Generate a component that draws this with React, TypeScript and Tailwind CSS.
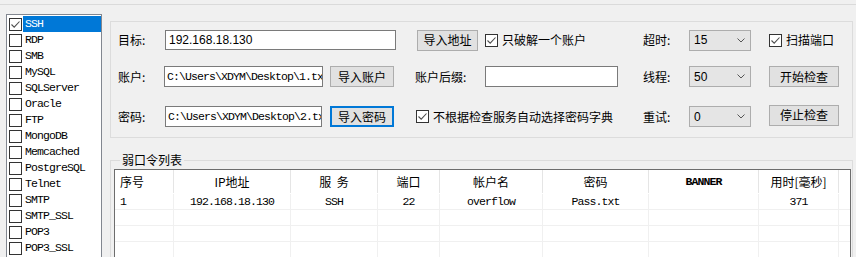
import React from 'react';

const UI = { fontFamily: '"Noto Sans CJK SC", "Noto Sans", sans-serif' };
const MONO = { fontFamily: '"Liberation Mono", "Noto Sans CJK SC", monospace' };
const SANS = { fontFamily: '"Liberation Sans", Arial, sans-serif' };

const SERVICES = [
  'SSH', 'RDP', 'SMB', 'MySQL', 'SQLServer', 'Oracle', 'FTP', 'MongoDB',
  'Memcached', 'PostgreSQL', 'Telnet', 'SMTP', 'SMTP_SSL', 'POP3', 'POP3_SSL',
];

const COLUMNS = [
  { title: '序号', width: 59, align: 'left' },
  { title: 'IP地址', width: 117, align: 'center' },
  { title: '服  务', width: 87, align: 'center' },
  { title: '端口', width: 62, align: 'center' },
  { title: '帐户名', width: 103, align: 'center' },
  { title: '密码', width: 106, align: 'center' },
  { title: 'BANNER', width: 110, align: 'center' },
  { title: '用时[毫秒]', width: 80, align: 'center' },
] as const;

const ROWS = [
  ['1', '192.168.18.130', 'SSH', '22', 'overflow', 'Pass.txt', '', '371'],
  ['', '', '', '', '', '', '', ''],
  ['', '', '', '', '', '', '', ''],
  ['', '', '', '', '', '', '', ''],
];

// SimSun-like narrow mono text
const monoText = 'text-[11.5px] tracking-[-0.9px]';

function Check({ checked }: { checked?: boolean }) {
  return (
    <span className="flex h-[13px] w-[13px] shrink-0 items-center justify-center border border-[#333333] bg-white">
      {checked && (
        <svg width="11" height="11" viewBox="0 0 11 11">
          <path d="M1.5 5.5 L4.2 8.2 L9.5 2.5" stroke="#4d4d4d" strokeWidth="1.1" fill="none" />
        </svg>
      )}
    </span>
  );
}

function Button({ label, w, focused }: { label: string; w: string; focused?: boolean }) {
  return (
    <div
      className={`flex h-[21px] items-center justify-center bg-[#e1e1e1] text-[12px] ${w} ${
        focused ? 'border-2 border-[#0078d7]' : 'border border-[#adadad]'
      }`}
    >
      {label}
    </div>
  );
}

function Select({ value }: { value: string }) {
  return (
    <div className="flex h-[21px] w-[62px] items-center justify-between border border-[#adadad] bg-[#e5e5e5] pl-[4px] pr-[5px]">
      <span className="text-[12px]" style={SANS}>{value}</span>
      <svg width="8" height="5" viewBox="0 0 8 5">
        <path d="M0.5 0.5 L4 4 L7.5 0.5" stroke="#555" strokeWidth="1" fill="none" />
      </svg>
    </div>
  );
}

function PathInput({ value, w }: { value: string; w: string }) {
  return (
    <div className={`flex h-[21px] items-center overflow-hidden whitespace-nowrap border border-[#7a7a7a] bg-white pl-[2px] ${w}`}>
      <span className={monoText} style={MONO}>{value}</span>
    </div>
  );
}

export default function App() {
  return (
    <div className="h-[257px] w-[856px] overflow-hidden bg-[#f0f0f0] text-black" style={UI}>
      <div className="h-[4px]" />
      <div className="h-px bg-[#dadada]" />
      <div className="flex items-start">
        {/* Service list */}
        <div className="ml-[6px] mt-[9px] h-[260px] w-[96px] border border-[#828790] bg-white pt-[1px]">
          {SERVICES.map((s, i) => (
            <div key={s} className="flex h-[16px] items-center">
              <div className="ml-[2px] mr-px">
                <Check checked={i === 0} />
              </div>
              <div
                className={`flex h-[16px] flex-1 items-center pl-[2px] ${i === 0 ? 'bg-[#0078d7] text-white' : ''}`}
              >
                <span className={monoText} style={MONO}>{s}</span>
              </div>
            </div>
          ))}
        </div>

        <div className="ml-[8px] mt-[16px] flex w-[743px] flex-col">
          {/* Settings group */}
          <div className="h-[117px] border border-[#dcdcdc] pt-[7px] text-[12px]">
            <div className="flex h-[22px] items-center pl-[7px]">
              <span className="w-[47px]">目标:</span>
              <div className="flex h-[20px] w-[231px] items-center border border-[#7a7a7a] bg-white pl-[3px]">
                <span style={SANS}>192.168.18.130</span>
              </div>
              <div className="ml-[21px]"><Button label="导入地址" w="w-[61px]" /></div>
              <div className="ml-[7px] flex w-[158px] items-center gap-[4px]">
                <Check checked />
                <span>只破解一个账户</span>
              </div>
              <span className="w-[46px]">超时:</span>
              <Select value="15" />
              <div className="ml-[18px] flex items-center gap-[4px]">
                <Check checked />
                <span>扫描端口</span>
              </div>
            </div>

            <div className="mt-[15px] flex h-[21px] items-center pl-[7px]">
              <span className="w-[46px]">账户:</span>
              <PathInput value="C:\Users\XDYM\Desktop\1.txt" w="w-[159px]" />
              <div className="ml-[7px]"><Button label="导入账户" w="w-[64px]" /></div>
              <span className="ml-[21px] w-[70px]">账户后缀:</span>
              <div className="h-[21px] w-[133px] border border-[#7a7a7a] bg-white" />
              <span className="ml-[25px] w-[46px]">线程:</span>
              <Select value="50" />
              <div className="ml-[18px]"><Button label="开始检查" w="w-[70px]" /></div>
            </div>

            <div className="mt-[18px] flex h-[23px] items-center pl-[7px]">
              <span className="w-[47px]">密码:</span>
              <PathInput value="C:\Users\XDYM\Desktop\2.txt" w="w-[157px]" />
              <div className="ml-[8px]"><Button label="导入密码" w="w-[64px]" focused /></div>
              <div className="ml-[22px] flex w-[227px] items-center gap-[4px]">
                <Check checked />
                <span>不根据检查服务自动选择密码字典</span>
              </div>
              <span className="w-[46px]">重试:</span>
              <Select value="0" />
              <div className="ml-[18px] -mt-[3px]"><Button label="停止检查" w="w-[70px]" /></div>
            </div>
          </div>

          {/* Results group */}
          <fieldset className="mt-[14px] h-[120px] border border-[#dcdcdc] pl-[3px]">
            <legend className="ml-[6px] px-[2px] text-[12px] leading-[16px]">弱口令列表</legend>
            <div className="mt-px h-[110px] w-[737px] border border-[#6d6d6d] bg-white">
              <div className="flex h-[24px]">
                {COLUMNS.map((c) => (
                  <div
                    key={c.title}
                    className={`flex h-[23px] shrink-0 items-center whitespace-pre border-r border-[#e5e5e5] text-[12px] ${
                      c.align === 'left' ? 'justify-start pl-[5px]' : 'justify-center'
                    }`}
                    style={{ width: c.width }}
                  >
                    {c.title === 'BANNER' ? (
                      <span className={`${monoText} font-semibold`} style={MONO}>BANNER</span>
                    ) : (
                      c.title
                    )}
                  </div>
                ))}
              </div>
              {ROWS.map((r, ri) => (
                <div key={ri} className="flex h-[16px] border-b border-[#f0f0f0]">
                  {COLUMNS.map((c, ci) => (
                    <div
                      key={c.title}
                      className={`flex shrink-0 items-center border-r border-[#f0f0f0] ${
                        c.align === 'left' ? 'justify-start pl-[5px]' : 'justify-center'
                      }`}
                      style={{ width: c.width }}
                    >
                      <span className={monoText} style={MONO}>{r[ci]}</span>
                    </div>
                  ))}
                </div>
              ))}
            </div>
          </fieldset>
        </div>
      </div>
    </div>
  );
}
